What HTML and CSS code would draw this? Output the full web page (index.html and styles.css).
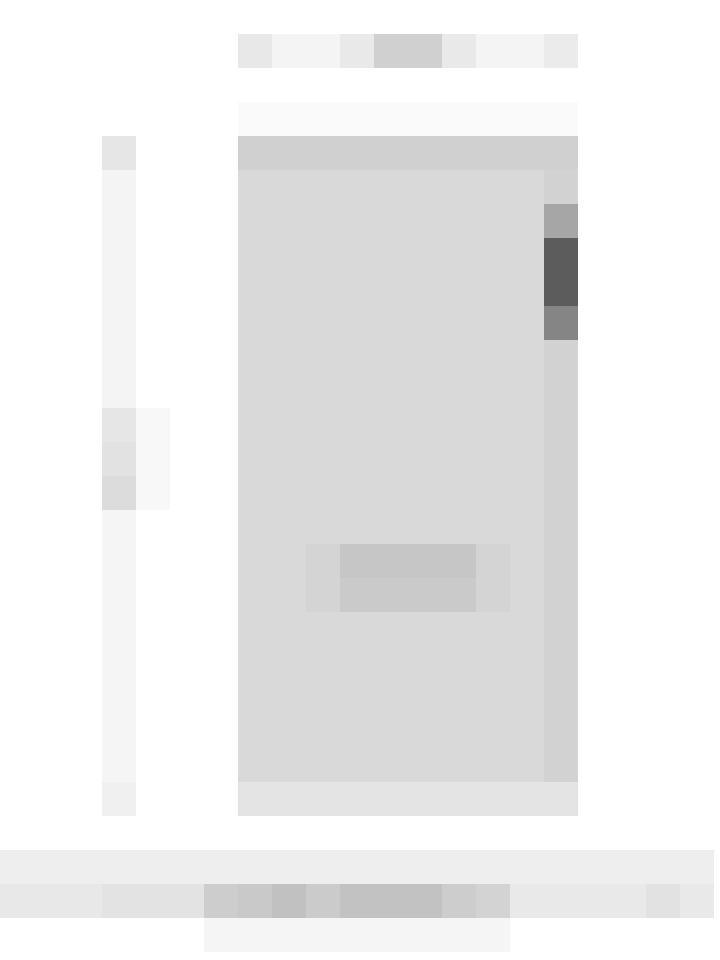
FILE: index.html
```html
<!DOCTYPE html>
<html lang="en">
<head>
<meta charset="utf-8">
<title>Screen</title>
<link rel="stylesheet" href="styles.css">
</head>
<body>
<div class="page">
  <header class="topbar">
    <span class="tb tb-edge"></span>
    <span class="tb tb-light w2"></span>
    <span class="tb tb-mid"></span>
    <span class="tb tb-dark w2"></span>
    <span class="tb tb-mid"></span>
    <span class="tb tb-light w2"></span>
    <span class="tb tb-edge2"></span>
  </header>
  <div class="band"></div>

  <nav class="rail">
    <span class="r r-head"></span>
    <span class="r r-fill h7"></span>
    <span class="r r-a"></span>
    <span class="r r-b"></span>
    <span class="r r-c"></span>
    <span class="r r-fill2 h8"></span>
    <span class="r r-foot"></span>
  </nav>
  <div class="flyout"></div>

  <main class="panel">
    <div class="panel-head"></div>
    <div class="panel-body">
      <div class="content">
        <div class="halo"><button class="btn" type="button"></button></div>
      </div>
      <div class="scroll">
        <span class="sc sc-track"></span>
        <span class="sc sc-top"></span>
        <span class="sc sc-thumb"></span>
        <span class="sc sc-bottom"></span>
        <span class="sc sc-rest"></span>
      </div>
    </div>
  </main>
  <div class="panel-foot"></div>

  <div class="bar bar1"></div>
  <div class="bar bar2">
    <span class="seg w3 g1"></span>
    <span class="seg w3 g2"></span>
    <span class="seg g3"></span>
    <span class="seg g4"></span>
    <span class="seg g5"></span>
    <span class="seg g6"></span>
    <span class="seg w3 g7"></span>
    <span class="seg g3"></span>
    <span class="seg g8"></span>
    <span class="seg w4 g9"></span>
    <span class="seg g10"></span>
    <span class="seg g9"></span>
  </div>
  <div class="bar bar3"></div>
</div>
</body>
</html>
```

FILE: styles.css
```css
html, body {
  margin: 0;
  padding: 0;
  background: #ffffff;
  font-family: "Liberation Sans", Arial, sans-serif;
}

.page {
  display: grid;
  grid-template-columns: repeat(21, 34px);
  grid-template-rows: repeat(28, 34px);
  width: 720px;
  height: 960px;
}

/* top bar */
.topbar {
  grid-column: 8 / 18;
  grid-row: 2;
  display: flex;
}
.tb { width: 34px; height: 34px; display: block; }
.w2 { width: 68px; }
.w3 { width: 102px; }
.w4 { width: 136px; }
.tb-edge { background: #e8e8e8; }
.tb-edge2 { background: #ebebeb; }
.tb-light { background: #f4f4f4; }
.tb-mid { background: #e9e9e9; }
.tb-dark { background: #d0d0d0; }

.band {
  grid-column: 8 / 18;
  grid-row: 4;
  background: #fafafa;
}

/* left rail */
.rail {
  grid-column: 4;
  grid-row: 5 / 25;
  display: flex;
  flex-direction: column;
}
.r { display: block; height: 34px; }
.h7 { height: 238px; }
.h8 { height: 272px; }
.r-head { background: #e6e6e6; }
.r-fill { background: #f4f4f4; }
.r-a { background: #e6e6e6; }
.r-b { background: #e2e2e2; }
.r-c { background: #dcdcdc; }
.r-fill2 { background: #f5f5f5; }
.r-foot { background: #f0f0f0; }

.flyout {
  grid-column: 5;
  grid-row: 13 / 16;
  background: #f8f8f8;
}

/* main panel */
.panel {
  grid-column: 8 / 18;
  grid-row: 5 / 24;
  display: flex;
  flex-direction: column;
}
.panel-head {
  height: 34px;
  background: #d0d0d0;
}
.panel-body {
  flex: 1;
  display: flex;
}
.content {
  flex: 1;
  background: #d9d9d9;
  padding: 374px 0 0 68px;
}
.halo {
  width: 136px;
  padding: 0 34px;
  background: #d4d4d4;
}
.btn {
  display: block;
  width: 136px;
  height: 68px;
  border: 0;
  padding: 0;
  background: linear-gradient(#c6c6c6 0 50%, #cacaca 50% 100%);
}
.scroll {
  width: 34px;
  display: flex;
  flex-direction: column;
}
.sc { display: block; height: 34px; }
.sc-track { background: #d2d2d2; }
.sc-top { background: #a6a6a6; }
.sc-thumb { height: 68px; background: #5c5c5c; }
.sc-bottom { background: #858585; }
.sc-rest { flex: 1; background: #d2d2d2; }

.panel-foot {
  grid-column: 8 / 18;
  grid-row: 24;
  background: #e4e4e4;
}

/* bottom bars */
.bar1 {
  grid-column: 1 / 22;
  grid-row: 26;
  background: #eeeeee;
}
.bar2 {
  grid-column: 1 / 22;
  grid-row: 27;
  display: flex;
}
.seg { display: block; width: 34px; height: 34px; }
.seg.w3 { width: 102px; }
.seg.w4 { width: 136px; }
.g1 { background: #e8e8e8; }
.g2 { background: #e3e3e3; }
.g3 { background: #cdcdcd; }
.g4 { background: #c9c9c9; }
.g5 { background: #c1c1c1; }
.g6 { background: #cbcbcb; }
.g7 { background: #c2c2c2; }
.g8 { background: #d3d3d3; }
.g9 { background: #e9e9e9; }
.g10 { background: #e2e2e2; }
.bar3 {
  grid-column: 7 / 16;
  grid-row: 28;
  background: #f5f5f5;
}
```
